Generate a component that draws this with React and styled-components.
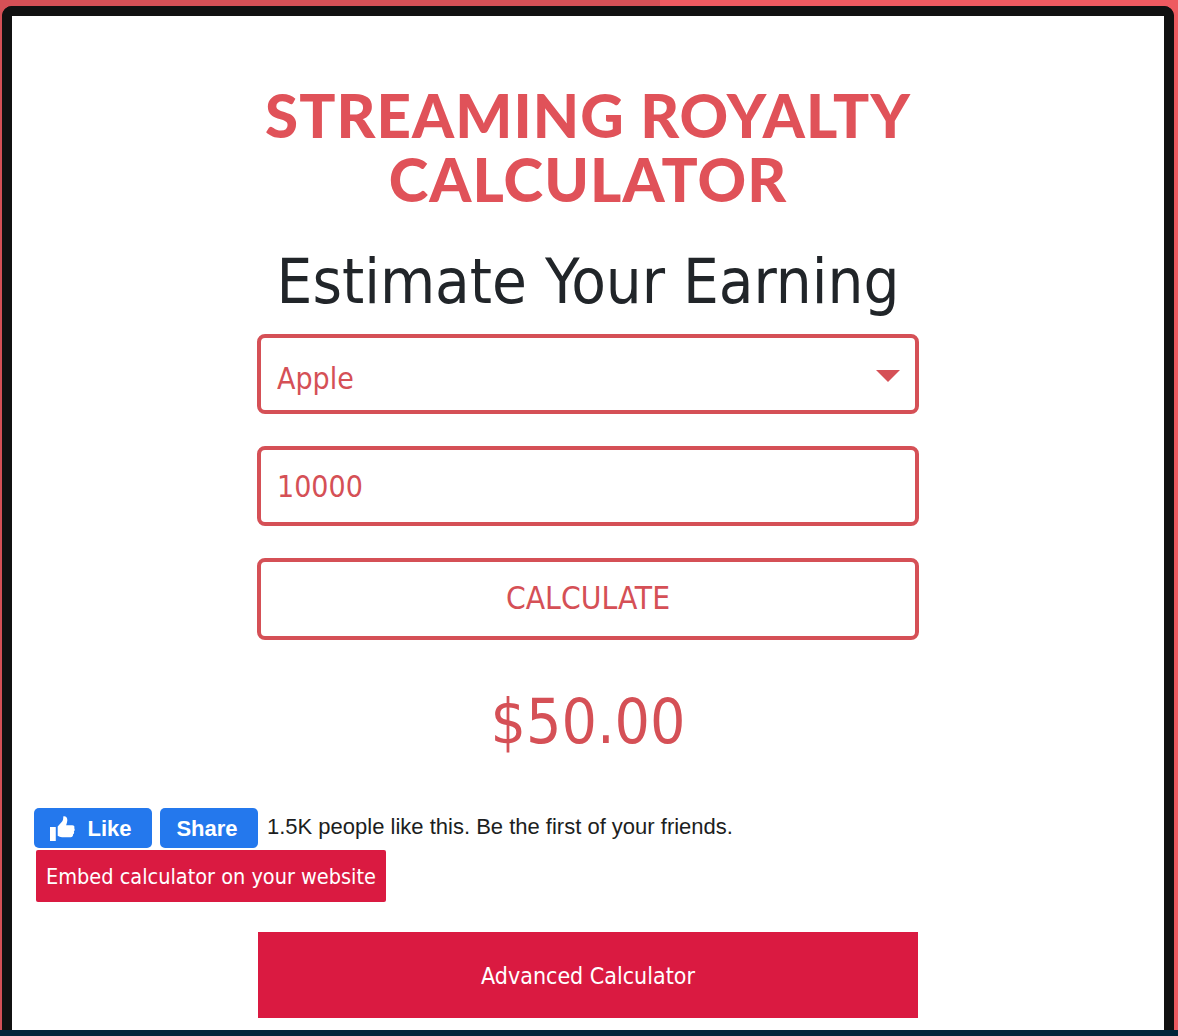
import React from 'react';
import styled, { createGlobalStyle } from 'styled-components';

const GlobalStyle = createGlobalStyle`
  html, body {
    margin: 0;
    padding: 0;
    height: 1036px;
    overflow: hidden;
    background: #00233a;
  }
  * {
    box-sizing: border-box;
  }
`;

const bodyFont = `"DejaVu Sans Condensed", "DejaVu Sans", "Noto Sans", sans-serif`;

const Page = styled.div`
  height: 1036px;
  display: flex;
  flex-direction: column;
  background: linear-gradient(to right, #d55056 660px, #ee5a60 660px);
`;

const Frame = styled.main`
  height: 1024px;
  margin: 6px 4px 0 2px;
  padding-top: 67px;
  background: #fff;
  border: 10px solid #111;
  border-bottom: 0;
  border-radius: 10px 10px 0 0;
  overflow: hidden;
  font-family: ${bodyFont};
`;

const BottomStrip = styled.div`
  height: 6px;
  background: #00233a;
`;

const Title = styled.h1`
  margin: 0 auto;
  width: 700px;
  font-family: Lato, "Liberation Sans", sans-serif;
  font-size: 60px;
  font-weight: 900;
  line-height: 64px;
  letter-spacing: 1.1px;
  text-align: center;
  color: #e05259;
`;

const Subtitle = styled.h2`
  margin: 33px 0 14px;
  font-size: 63px;
  font-weight: 400;
  line-height: 76px;
  text-align: center;
  color: #212529;
`;

const Form = styled.form`
  width: 662px;
  margin: 0 auto;
  display: flex;
  flex-direction: column;
  gap: 32px;
`;

const SelectWrap = styled.div`
  position: relative;
`;

const Caret = styled.span`
  position: absolute;
  top: 36px;
  right: 19px;
  width: 0;
  height: 0;
  border-left: 12px solid transparent;
  border-right: 12px solid transparent;
  border-top: 12px solid #d55056;
`;

const fieldStyle = `
  display: block;
  width: 100%;
  height: 80px;
  padding: 0 16px;
  background: #fff;
  border: 4px solid #d55056;
  border-radius: 8px;
  outline: none;
  font-family: ${bodyFont};
  font-size: 30px;
  color: #d55056;
`;

const Select = styled.select`
  ${fieldStyle}
  padding-top: 8px;
  appearance: none;
`;

const Input = styled.input`
  ${fieldStyle}
`;

const CalcButton = styled.button`
  ${fieldStyle}
  height: 82px;
  padding-bottom: 2px;
  font-size: 31.5px;
  text-align: center;
`;

const Result = styled.div`
  margin-top: 38px;
  font-size: 62px;
  line-height: 88px;
  text-align: center;
  color: #d55056;
`;

const SocialRow = styled.div`
  margin: 42px 0 0 22px;
  display: flex;
  align-items: center;
  gap: 8px;
  font-family: "Liberation Sans", Arial, sans-serif;
`;

const FbButton = styled.button`
  display: flex;
  align-items: center;
  justify-content: center;
  gap: 12px;
  width: ${({ $width }) => $width}px;
  height: 40px;
  padding: 1px 4px 0 0;
  border: 0;
  border-radius: 5px;
  background: #2478ed;
  color: #fff;
  font-family: inherit;
  font-size: 22px;
  font-weight: 700;
`;

const LikeText = styled.span`
  margin: 0 0 2px 1px;
  font-size: 22px;
  color: #1c1e21;
  white-space: nowrap;
`;

const EmbedButton = styled.a`
  display: flex;
  align-items: center;
  justify-content: center;
  width: 350px;
  height: 52px;
  margin: 2px 0 0 24px;
  background: #da1a41;
  border-radius: 2px;
  color: #fff;
  font-size: 21.5px;
  white-space: nowrap;
`;

const AdvancedButton = styled.a`
  display: flex;
  align-items: center;
  justify-content: center;
  width: 660px;
  height: 86px;
  margin: 30px auto 0;
  padding-top: 2px;
  background: #da1a41;
  color: #fff;
  font-size: 23px;
`;

const ThumbIcon = () => (
  <svg width="25" height="25" viewBox="0 0 26 26" aria-hidden="true">
    <path
      fill="#fff"
      d="M0 11.5h6V26H0zM8 11l4.6-5.2c1-1.3 1.2-3 1.2-5.3 2.6-.6 4.4 1.2 4.2 4.2-.1 1.6-.6 3.2-1.2 4.8h6.4c2 0 2.8 1.7 1.9 3.1.9 1 .8 2.6-.3 3.4.6 1.2.2 2.6-.9 3.2.3 1.500-.7 2.800-2.300 2.800H12.500c-1.800 0-3.100-.6-4.500-1.400z"
    />
  </svg>
);

export default function App() {
  return (
    <>
      <GlobalStyle />
      <Page>
        <Frame>
          <Title>STREAMING ROYALTY CALCULATOR</Title>
          <Subtitle>Estimate Your Earning</Subtitle>
          <Form onSubmit={(e) => e.preventDefault()}>
            <SelectWrap>
              <Select defaultValue="Apple">
                <option>Apple</option>
                <option>Spotify</option>
                <option>YouTube</option>
              </Select>
              <Caret />
            </SelectWrap>
            <Input defaultValue="10000" />
            <CalcButton type="submit">CALCULATE</CalcButton>
          </Form>
          <Result>$50.00</Result>
          <SocialRow>
            <FbButton $width={118}>
              <ThumbIcon />
              Like
            </FbButton>
            <FbButton $width={98}>Share</FbButton>
            <LikeText>1.5K people like this. Be the first of your friends.</LikeText>
          </SocialRow>
          <EmbedButton>Embed calculator on your website</EmbedButton>
          <AdvancedButton>Advanced Calculator</AdvancedButton>
        </Frame>
        <BottomStrip />
      </Page>
    </>
  );
}
